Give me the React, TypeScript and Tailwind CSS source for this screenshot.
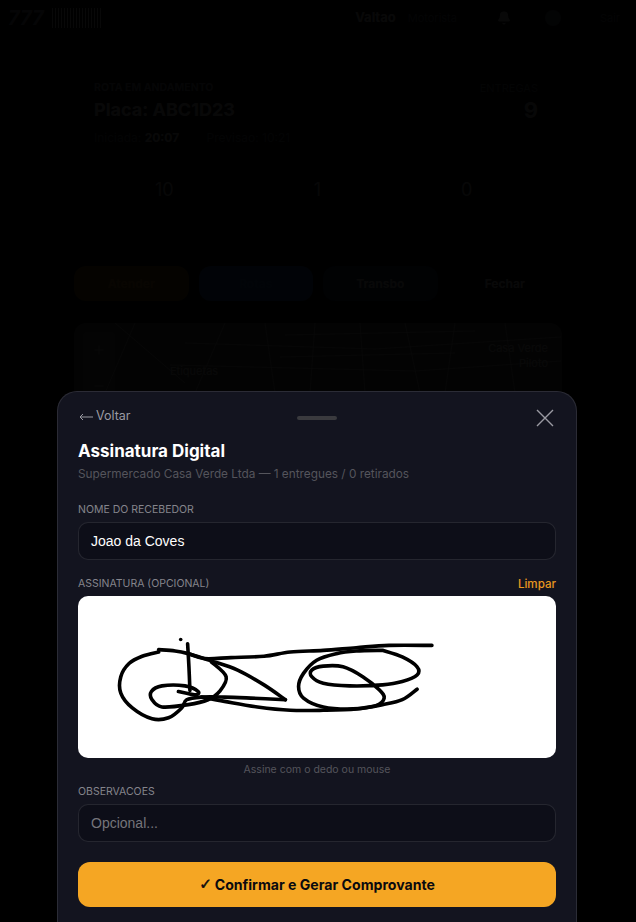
import React from 'react';
import { Bell, Minus, Plus } from 'lucide-react';

type Pt = [number, number];

// pontos da assinatura, em coordenadas do viewBox
const STROKES: Pt[][] = [
    [[200, 88], [250, 92], [290, 100], [340, 115], [420, 112], [520, 108], [600, 95], [700, 90], [800, 82], [900, 75], [1030, 75]],
    [[200, 95], [150, 108], [110, 130], [85, 170], [85, 220], [120, 265], [180, 298], [230, 295], [270, 265], [285, 240], [330, 232], [400, 232], [480, 235], [585, 240]],
    [[585, 240], [520, 195], [440, 150], [360, 122], [290, 100]],
    [[360, 125], [405, 170], [385, 215], [350, 240], [290, 255], [210, 262], [180, 240], [178, 215], [210, 198], [280, 198], [320, 215], [310, 225], [260, 215]],
    [[288, 70], [292, 140], [295, 212]],
    [[330, 232], [400, 245], [500, 262], [600, 272], [700, 272], [800, 268], [880, 255], [940, 240], [985, 208]],
    [[880, 90], [940, 110], [985, 140], [985, 165], [940, 185], [880, 195], [780, 198], [700, 190], [665, 170], [665, 150], [700, 138], [760, 140], [820, 170], [870, 210], [885, 235], [860, 258], [790, 268], [700, 262], [640, 235], [625, 200], [640, 160], [680, 120], [740, 100], [800, 92], [880, 90]],
];

const smooth = (pts: Pt[]) => {
    let d = `M${pts[0][0]} ${pts[0][1]}`;
    for (let i = 0; i < pts.length - 1; i++) {
        const p0 = pts[i - 1] ?? pts[i];
        const p1 = pts[i];
        const p2 = pts[i + 1];
        const p3 = pts[i + 2] ?? p2;
        d += ` C${p1[0] + (p2[0] - p0[0]) / 6} ${p1[1] + (p2[1] - p0[1]) / 6} ${p2[0] - (p3[0] - p1[0]) / 6} ${p2[1] - (p3[1] - p1[1]) / 6} ${p2[0]} ${p2[1]}`;
    }
    return d;
};

const Signature = () => (
    <svg viewBox="-36 -72 1434 486" className="block h-full w-full" fill="none">
        {STROKES.map((pts, i) => (
            <path key={i} d={smooth(pts)} stroke="#000" strokeWidth="11" strokeLinecap="round" strokeLinejoin="round" />
        ))}
        <circle cx="267" cy="57" r="5.5" fill="#000" />
    </svg>
);

const BARCODE = [0, 5, 9, 14, 18, 21, 26, 30, 33, 36, 40, 43, 46, 50, 53, 56, 58];

// ruas do mapa que aparece apagado atras do modal
const MapLines = () => (
    <svg viewBox="0 0 486 70" className="absolute inset-x-0 top-0 h-[70px] w-full" fill="none" stroke="#fff" strokeOpacity="0.6" strokeWidth="1">
        <path d="M40 0 L110 60 M60 0 L30 70 M150 0 L120 70 M110 20 L300 26 L486 14 M95 42 L340 48 L486 38" />
        <path d="M190 0 L200 70 M240 0 L235 70 M285 0 L290 70 M330 0 L345 70 M380 0 L370 70 M430 0 L440 70 M210 12 L400 8 M205 34 L380 30" />
    </svg>
);

// tela que fica por tras do modal
const Background = () => (
    <div className="absolute inset-0 overflow-hidden bg-[#0a0a0f] text-white">
        <header className="flex h-[36px] items-center justify-between pl-2 pr-4">
            <div className="flex items-center gap-2">
                <span className="text-[20px] font-bold italic leading-none text-gray-400">777</span>
                <div className="flex h-[20px] w-[62px] items-stretch gap-[2px]">
                    {BARCODE.map((b) => (
                        <span key={b} className="w-[1px] bg-white" />
                    ))}
                </div>
            </div>
            <div className="flex items-center gap-3">
                <span className="text-[13px] font-bold">Valtao</span>
                <span className="mr-[28px] text-[11px] text-gray-500">Motorista</span>
                <Bell size={14} fill="currentColor" className="mr-[22px]" />
                <span className="mr-[27px] h-4 w-4 rounded-full bg-gray-500" />
                <span className="text-[11px] text-gray-500">Sair</span>
            </div>
        </header>
        <section className="mx-[94px] mt-[44px] flex justify-between">
            <div>
                <p className="text-[10.5px] font-bold leading-4 text-gray-400">ROTA EM ANDAMENTO</p>
                <p className="text-[18px] font-bold leading-7">Placa: ABC1D23</p>
                <p className="mt-[6px] text-[12px] leading-4 text-gray-500">Iniciada: <b className="text-white">20:07</b> <span className="ml-6">Previsao: 10:21</span></p>
            </div>
            <div className="mr-[4px] text-right">
                <p className="text-[11px] leading-4 text-gray-500">ENTREGAS</p>
                <p className="text-[22px] font-bold leading-7 text-gray-300">9</p>
            </div>
        </section>
        <section className="ml-[155px] mt-[30px] flex gap-[140px] text-[18px] font-normal text-gray-300">
            <span>10</span>
            <span>1</span>
            <span>0</span>
        </section>
        <nav className="mx-[74px] mt-[63px] grid h-[35px] grid-cols-4 gap-[10px] text-[12px] font-bold">
            <span className="flex items-center justify-center rounded-xl bg-[#f5a623]/60 text-[#f5a623]">Atender</span>
            <span className="flex items-center justify-center rounded-xl bg-[#3b82f6]/80 text-[#3b82f6]">Rotas</span>
            <span className="flex items-center justify-center rounded-xl bg-[#3b82f6]/40">Transbo</span>
            <span className="flex items-center justify-center rounded-xl">Fechar</span>
        </nav>
        <section className="relative mx-[74px] mt-[22px] h-[300px] overflow-hidden rounded-xl bg-[#666] p-2">
            <MapLines />
            <div className="absolute left-[9px] top-[9px] flex h-[72px] w-[32px] flex-col items-center justify-around rounded bg-white/10">
                <Plus size={14} />
                <Minus size={14} />
            </div>
            <p className="absolute left-[96px] top-[40px] text-[11px]">Etiquetas</p>
            <p className="absolute right-[14px] top-[18px] text-right text-[11px] leading-[15px]">Casa Verde<br />Piloto</p>
        </section>
    </div>
);

const App: React.FC = () => {
    return (
        <div className="relative h-[922px] w-[636px] overflow-hidden bg-black [font-family:'Inter','Liberation_Sans',sans-serif]">
            <Background />
            <div className="absolute inset-0 bg-black/97" />

            {/* modal de assinatura */}
            <div className="absolute bottom-0 left-[57px] right-[59px] top-[391px] rounded-t-[20px] border border-b-0 border-white/10 bg-[#13141f] px-[20px] pt-[14px]">
                <div className="relative flex h-[24px] items-center justify-between">
                    <span className="-mt-[4px] flex items-center gap-[3px] text-[12.5px] leading-[20px] text-[#9a9aa2]">
                        <svg width="14" height="8" viewBox="0 0 14 8" fill="none" stroke="currentColor" strokeWidth="1" className="ml-[1px] mt-[2px]">
                            <path d="M14 4H1M4 1L1 4L4 7" />
                        </svg>
                        Voltar
                    </span>
                    <span className="absolute left-[219px] top-[10px] h-[4px] w-[40px] rounded-full bg-[#3a3a3e]" />
                    <svg width="18" height="18" viewBox="0 0 18 18" fill="none" stroke="#9a9aa2" strokeWidth="1.4" className="mr-[2px]">
                        <path d="M1 1L17 17M17 1L1 17" />
                    </svg>
                </div>
                <h2 className="mt-[9px] text-[17px] font-bold leading-[24px] text-white">Assinatura Digital</h2>
                <p className="mt-[3px] text-[11.8px] leading-[16px] text-[#55555c]">Supermercado Casa Verde Ltda — 1 entregues / 0 retirados</p>

                <p className="mt-[21px] text-[10.5px] leading-[14px] text-[#85858c]">NOME DO RECEBEDOR</p>
                <div className="mt-[5px] flex h-[38px] items-center rounded-[10px] border border-white/10 bg-[#0d0e18] px-[12px] text-[14px] text-white [font-family:'Liberation_Sans',sans-serif]">
                    Joao da Coves
                </div>

                <div className="mt-[17px] flex items-center justify-between">
                    <p className="text-[10.5px] leading-[14px] text-[#85858c]">ASSINATURA (OPCIONAL)</p>
                    <p className="text-[11.6px] font-medium leading-[14px] text-[#e8981f]">Limpar</p>
                </div>
                <div className="mt-[5px] h-[162px] overflow-hidden rounded-[10px] border border-white/10 bg-white">
                    <Signature />
                </div>
                <p className="mt-[5px] text-center text-[10.5px] leading-[14px] text-[#55555c]">Assine com o dedo ou mouse</p>

                <p className="mt-[8px] text-[10.5px] leading-[14px] text-[#85858c]">OBSERVACOES</p>
                <div className="mt-[5px] flex h-[38px] items-center rounded-[10px] border border-white/10 bg-[#0d0e18] px-[12px] text-[14px] text-[#75757b] [font-family:'Liberation_Sans',sans-serif]">
                    Opcional...
                </div>

                <button type="button" className="mt-[20px] flex h-[45px] w-full items-center justify-center gap-[3px] rounded-[12px] bg-[#f5a623] text-[14.1px] font-bold text-[#0a0a0f]">
                    <span className="text-[15px] [-webkit-text-stroke:0.5px_#0a0a0f] [font-family:'DejaVu_Sans',sans-serif]">✓</span>
                    Confirmar e Gerar Comprovante
                </button>
            </div>
        </div>
    );
};

export default App;
